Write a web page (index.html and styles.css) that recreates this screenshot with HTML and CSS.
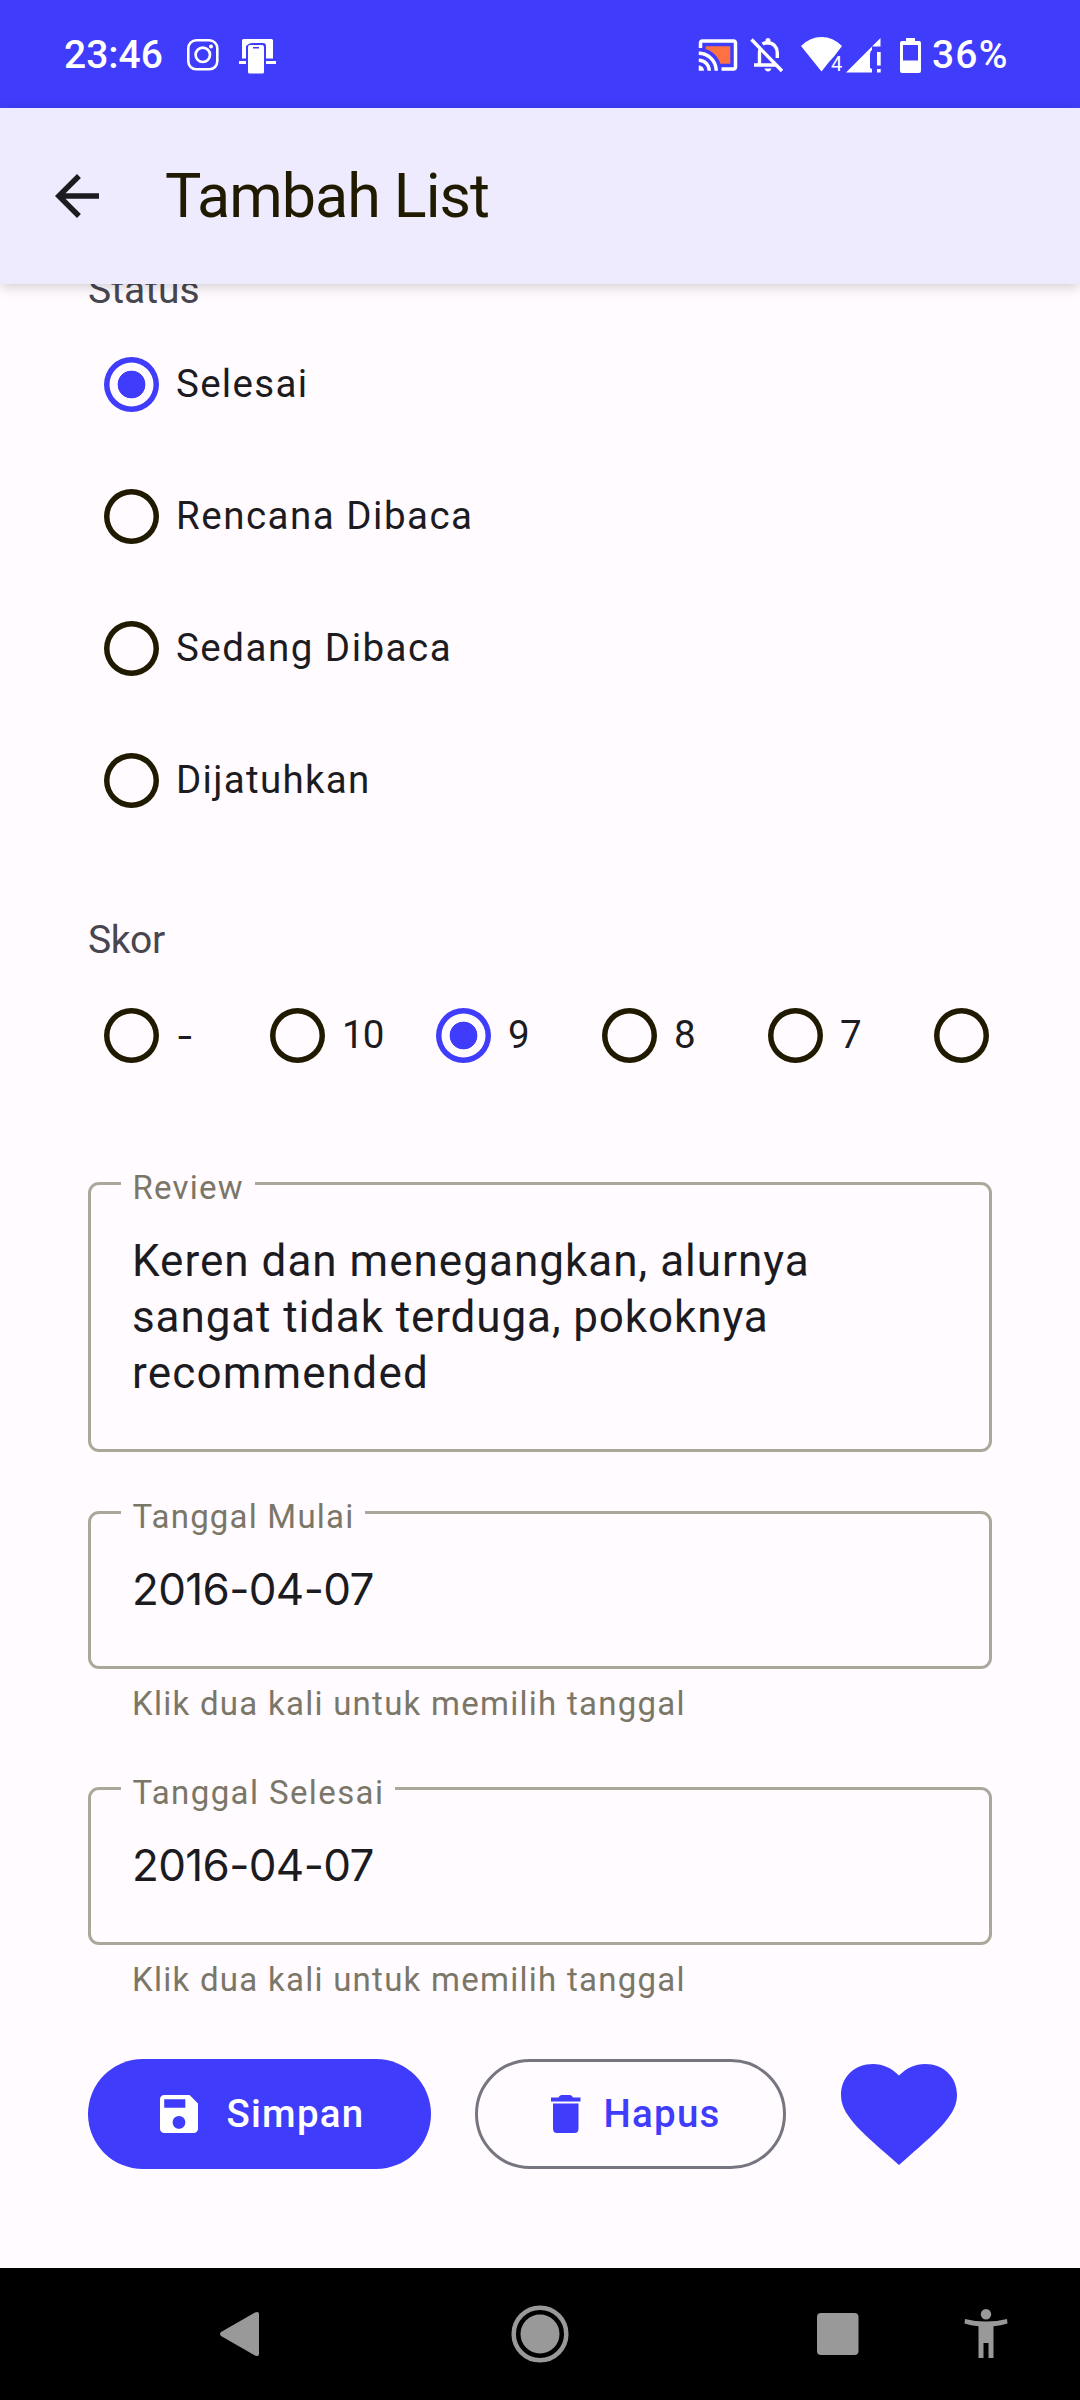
FILE: index.html
```html
<!DOCTYPE html>
<html lang="id">
<head>
<meta charset="utf-8">
<title>Tambah List</title>
<link rel="stylesheet" href="styles.css">
</head>
<body>
<div class="screen">
  <div class="statusbar">
    <span class="clock">23:46</span>
    <svg class="ic-camera" width="32" height="32" viewBox="0 0 32 32" fill="none" stroke="#fff">
      <rect x="1.3" y="1.3" width="29" height="29" rx="8" stroke-width="2.6"/>
      <circle cx="15.8" cy="15.8" r="7.2" stroke-width="2.7"/>
      <circle cx="24" cy="7.6" r="2" fill="#fff" stroke="none"/>
    </svg>
    <svg class="ic-share" width="37" height="35" viewBox="0 0 37 35" fill="#fff">
      <path d="M4.500 0H32.500Q34 0 34 1.500V19.500H27V7Q27 4 24 4H13Q10 4 7 7V19.500H3V1.500Q3 0 4.500 0z"/>
      <path d="M0 22h7v3H0zM27 22h10v3H27z"/>
      <path fill-rule="evenodd" d="M11 6H23Q25 6 25 8V33Q25 34.500 23.500 34.500H10.500Q9 34.500 9 33V8Q9 6 11 6zM14 8v1.600h6V8z"/>
    </svg>
    <svg class="ic-cast" width="42" height="42" viewBox="0 0 24 24" fill="#fff">
      <path fill="#ff7043" d="M19 7H5v1.630c3.960 1.280 7.090 4.410 8.370 8.370H19V7z"/>
      <path d="M1 18v3h3c0-1.660-1.340-3-3-3zm0-4v2c2.760 0 5 2.240 5 5h2c0-3.870-3.130-7-7-7zm0-4v2c4.970 0 9 4.030 9 9h2c0-6.080-4.930-11-11-11zm20-7H3c-1.100 0-2 .9-2 2v3h2V5h18v14h-7v2h7c1.100 0 2-.9 2-2V5c0-1.100-.9-2-2-2z"/>
    </svg>
    <svg class="ic-bell" width="34" height="36" viewBox="0 0 34 36" fill="none" stroke="#fff" stroke-width="3.400">
      <path d="M1.500 2.500L32 34"/>
      <path d="M4 28h22M9.500 28V16Q9.500 13 11 11M12.500 7Q14.500 5.700 18 5.700Q27 6.500 27.300 16V21"/>
      <path d="M15.500 5V3.500Q15.500 1 18 1T20.500 3.500V5zM14.500 31.500h7Q20.500 34.500 18 34.500T14.500 31.500z" fill="#fff" stroke="none"/>
    </svg>
    <svg class="ic-wifi" width="42" height="36" viewBox="0 0 42 36">
      <path fill="#fff" d="M0 9Q9 0 20.500 0T41 9L33 19.500L28 25L20.500 34.500z"/>
      <text x="30" y="34" class="wifi-gen">4</text>
    </svg>
    <svg class="ic-signal" width="35" height="35" viewBox="0 0 35 35" fill="#fff">
      <path d="M0 34.500L26 8.500V12Q24 13 24 17V30L26 31V34.500zM26 8.500L34.500 0V8.500zM31 14h3.700v13.500H31zM31 31h3.700v3.500H31z"/>
    </svg>
    <svg class="ic-battery" width="21" height="35" viewBox="0 0 21 35" fill="#fff">
      <path fill-rule="evenodd" d="M6 0h9v3h4Q21 3 21 5V33Q21 35 19 35H2Q0 35 0 33V5Q0 3 2 3H6zM3 7V22.500H18V7z"/>
    </svg>
    <span class="percent">36%</span>
  </div>

  <header class="appbar">
    <svg width="66" height="66" viewBox="0 0 24 24" fill="#1c1b1f"><path d="M20 11H7.830l5.590-5.590L12 4l-8 8 8 8 1.410-1.410L7.830 13H20v-2z"/></svg>
    <h1 class="title">Tambah List</h1>
  </header>

  <main class="form">
    <div class="group-label status-label">Status</div>
    <div class="status-list">
      <div class="option"><i class="radio on"></i><span class="w-selesai">Selesai</span></div>
      <div class="option"><i class="radio"></i><span class="w-long">Rencana Dibaca</span></div>
      <div class="option"><i class="radio"></i><span class="w-long">Sedang Dibaca</span></div>
      <div class="option"><i class="radio"></i><span class="w-selesai">Dijatuhkan</span></div>
    </div>
    <div class="group-label score-label">Skor</div>
    <div class="score-list">
      <div class="option"><i class="radio"></i><span class="dash">-</span></div>
      <div class="option"><i class="radio"></i><span class="ten">10</span></div>
      <div class="option"><i class="radio on"></i><span>9</span></div>
      <div class="option"><i class="radio"></i><span>8</span></div>
      <div class="option"><i class="radio"></i><span>7</span></div>
      <div class="option"><i class="radio"></i></div>
    </div>

    <div class="field review">
      <span class="field-label">Review</span>
      <div class="review-text"><span>Keren dan menegangkan, alurnya</span><br><span class="line2">sangat tidak terduga, pokoknya</span><br><span class="line3">recommended</span></div>
    </div>
    <div class="field date first-date">
      <span class="field-label">Tanggal Mulai</span>
      <div class="date-text">2016-04-07</div>
    </div>
    <div class="helper">Klik dua kali untuk memilih tanggal</div>
    <div class="field date second-date">
      <span class="field-label w-end">Tanggal Selesai</span>
      <div class="date-text">2016-04-07</div>
    </div>
    <div class="helper">Klik dua kali untuk memilih tanggal</div>

    <div class="actions">
      <div class="btn save">
        <svg width="38" height="38" viewBox="3 3 18 18" fill="#fff"><path d="M17 3H5c-1.110 0-2 .9-2 2v14c0 1.100.89 2 2 2h14c1.100 0 2-.9 2-2V7l-4-4zm-5 16c-1.660 0-3-1.340-3-3s1.340-3 3-3 3 1.340 3 3-1.340 3-3 3zm3-10H5V5h10v4z"/></svg>
        <span>Simpan</span>
      </div>
      <div class="btn delete">
        <svg width="30" height="38" viewBox="0 0 30 38" fill="#403cfb"><path d="M0 2.500H7.500Q8.500 0 10.500 0H19Q21 0 22 2.500H29.500V6.500H0zM2 8.500H27.500V33.500Q27.500 38 23.500 38H6Q2 38 2 33.500z"/></svg>
        <span>Hapus</span>
      </div>
      <svg class="heart" width="116" height="101" viewBox="0 0 116 101" fill="#403cfb"><path d="M58 11.600C50.500 4 42 0 32 0C13.500 0 0 13 0 31C0 50 17 65 49.500 93.500L58 101L66.500 93.500C99 65 116 50 116 31C116 13 102.500 0 84 0C74 0 65.500 4 58 11.600z"/></svg>
    </div>
  </main>

  <nav class="navbar">
    <svg class="nav-back" width="40" height="46" viewBox="0 0 40 46" fill="#999"><path d="M1 21L35 1.500Q39 0 39 3V43Q39 46 35 44.500L1 25Q-1 23 1 21z"/></svg>
    <svg class="nav-home" width="58" height="58" viewBox="0 0 58 58"><circle cx="29" cy="29" r="26.300" fill="none" stroke="#999" stroke-width="4.500"/><circle cx="29" cy="29" r="19.500" fill="#999"/></svg>
    <svg class="nav-recent" width="42" height="42" viewBox="0 0 42 42"><rect width="41.500" height="42" rx="4" fill="#999"/></svg>
    <svg class="nav-access" width="44" height="50" viewBox="0 0 44 50" fill="#999"><circle cx="22" cy="5.200" r="5.200"/><path d="M1 10Q11 12.500 22 12.500T43 10L43.500 14.500Q37 16.500 29.500 17.200V49H24.500V34H19.500V49H14.500V17.200Q7 16.500.5 14.500z"/></svg>
  </nav>
</div>
</body>
</html>
```
FILE: styles.css
```css
* { box-sizing: border-box; }
body {
  margin: 0;
  font-family: Roboto, "Noto Sans", sans-serif;
  color: #1c1b1f;
  background: #fffbff;
}
svg { display: block; flex: none; }
.screen {
  width: 1080px;
  height: 2400px;
  display: flex;
  flex-direction: column;
  overflow: hidden;
}

/* system status bar */
.statusbar {
  flex: none;
  height: 108px;
  padding: 2px 0 0 64px;
  display: flex;
  align-items: center;
  background: #403cfb;
  color: #fff;
  font-size: 39px;
  font-weight: 500;
  line-height: 46px;
  white-space: nowrap;
}
.clock { width: 123px; }
.ic-share { margin-left: 20px; margin-top: 3px; }
.ic-cast { margin-left: 421px; }
.ic-bell { margin-left: 11px; }
.ic-wifi { margin-left: 17px; overflow: visible; }
.ic-signal { margin-left: 3px; }
.ic-battery { margin-left: 19px; }
.percent { margin-left: 11px; letter-spacing: 1.2px; }
.wifi-gen { font-size: 20px; fill: #fff; font-weight: 400; }

/* app bar */
.appbar {
  position: relative;
  z-index: 1;
  flex: none;
  height: 176px;
  padding-left: 44px;
  display: flex;
  align-items: center;
  gap: 55px;
  background: #efebff;
  box-shadow: 0 3px 12px rgba(0, 0, 0, .18);
}
.title {
  margin: 0;
  font-size: 61px;
  font-weight: 400;
  line-height: 72px;
  letter-spacing: -1px;
  color: #201b00;
}

/* form */
.form {
  flex: 1;
  margin-top: -17px;
  padding: 0 88px;
}
.group-label {
  font-size: 39px;
  line-height: 46px;
  color: #48464f;
}
.status-label { margin-bottom: 5px; letter-spacing: 0; }
.score-label { margin: 71px 0 6px; letter-spacing: -.4px; }
.option {
  flex: none;
  height: 132px;
  padding-left: 16px;
  display: flex;
  align-items: center;
  gap: 17px;
  font-size: 38.5px;
  line-height: 46px;
  letter-spacing: 1.5px;
}
.w-selesai { letter-spacing: 1.3px; }
.w-long { letter-spacing: 1.5px; }
.ten { letter-spacing: -1px; }
.dash { font-family: Inter, Roboto, sans-serif; }
.radio {
  flex: none;
  width: 55px;
  height: 55px;
  border-radius: 50%;
  box-shadow: inset 0 0 0 5.5px #201b00;
}
.radio.on {
  box-shadow: inset 0 0 0 5.5px #403cfb;
  background: radial-gradient(circle, #403cfb 13.5px, transparent 14.2px);
}
.score-list { display: flex; overflow: hidden; }
.score-list .option { width: 166px; }

.field {
  position: relative;
  border: 3px solid #aaa79b;
  border-radius: 11px;
  padding-left: 41px;
}
.field-label {
  position: absolute;
  left: 30px;
  top: -17px;
  padding: 0 11px 0 11.500px;
  font-size: 33px;
  line-height: 40px;
  letter-spacing: 1.2px;
  color: #7b7768;
  background: #fffbff;
}
.w-end { letter-spacing: 1.4px; }
.review { height: 270px; margin-top: 81px; padding-top: 48px; }
.review-text {
  font-size: 44px;
  line-height: 56px;
  letter-spacing: 1.02px;
}
.line2 { letter-spacing: .9px; }
.line3 { letter-spacing: 1.2px; }
.date { height: 158px; padding-top: 47px; }
.date-text {
  font-family: Inter, Roboto, sans-serif;
  font-size: 44px;
  line-height: 56px;
  letter-spacing: -.65px;
}
.first-date { margin-top: 59px; }
.second-date { margin-top: 63px; }
.helper {
  margin: 15px 0 0 44px;
  font-size: 33px;
  line-height: 40px;
  letter-spacing: 1.26px;
  color: #7b7768;
}

.actions { display: flex; margin-top: 59px; }
.btn {
  height: 110px;
  border-radius: 55px;
  display: flex;
  align-items: center;
  font-size: 38.5px;
  font-weight: 500;
  line-height: 46px;
  letter-spacing: 1.25px;
}
.save {
  width: 343px;
  padding-left: 72px;
  gap: 28.5px;
  background: #403cfb;
  color: #fff;
}
.delete {
  width: 311px;
  margin-left: 44px;
  padding-left: 73px;
  gap: 22.5px;
  border: 3px solid #777680;
  color: #403cfb;
}
.heart { margin: 5px 0 0 55px; }

/* system navigation */
.navbar {
  flex: none;
  height: 132px;
  padding-left: 220px;
  display: flex;
  align-items: center;
  background: #000;
}
.nav-home { margin-left: 251px; }
.nav-recent { margin-left: 248px; }
.nav-access { margin-left: 105px; }
```
